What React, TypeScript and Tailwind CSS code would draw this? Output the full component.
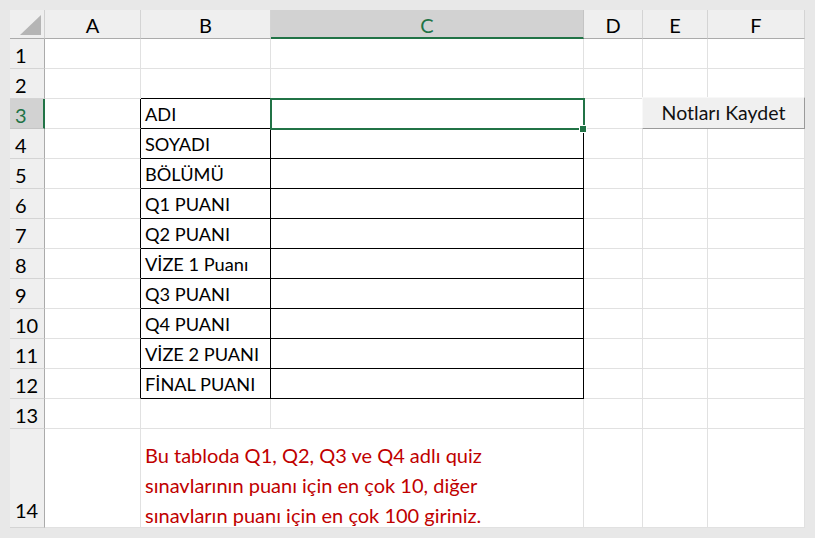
import React from "react";

const cols = ["A", "B", "C", "D", "E", "F"];

const labels: Record<number, string> = {
  3: "ADI",
  4: "SOYADI",
  5: "BÖLÜMÜ",
  6: "Q1 PUANI",
  7: "Q2 PUANI",
  8: "VİZE 1 Puanı",
  9: "Q3 PUANI",
  10: "Q4 PUANI",
  11: "VİZE 2 PUANI",
  12: "FİNAL PUANI",
};

const font = { fontFamily: "Lato, 'Open Sans', sans-serif" };

function inTable(row: number) {
  return row >= 3 && row <= 12;
}

function Cell({ row, col }: { row: number; col: number }) {
  // col index: 0 = A, 1 = B, ...
  let right = "border-r-[#e1e1e1]";
  let bottom = "border-b-[#e1e1e1]";
  if (inTable(row) && col <= 2) right = "border-r-black";
  if (inTable(row) && (col === 1 || col === 2)) bottom = "border-b-black";
  if (row === 2 && (col === 1 || col === 2)) bottom = "border-b-black";
  if (row === 14 && col === 1) right = "border-r-transparent";

  const label = col === 1 ? labels[row] : undefined;

  return (
    <div className={`relative bg-white border-r border-b ${right} ${bottom} flex items-center`}>
      {label && <span className="pl-[4px] pt-[2px] text-[18.2px] text-black leading-none whitespace-nowrap">{label}</span>}

      {row === 3 && col === 2 && (
        <div className="absolute -left-[1px] -top-[1px] w-[315px] h-[32px] border-2 border-[#217346] z-10">
          <div className="absolute -right-[3px] -bottom-[4px] w-[6px] h-[6px] bg-[#217346] outline outline-1 outline-white" />
        </div>
      )}

      {row === 3 && col === 4 && (
        <button className="absolute left-[-1px] top-[-2px] w-[163px] h-[32px] z-10 bg-[#f0f0f0] border border-t-[#f8f8f8] border-l-[#f8f8f8] border-r-[#9a9a9a] border-b-[#9a9a9a] text-[19.5px] text-[#111] leading-none">
          Notları Kaydet
        </button>
      )}

      {row === 14 && col === 1 && (
        <div className="absolute left-[4px] bottom-[-3px] z-10 flex flex-col text-[20px] text-[#c00000] whitespace-nowrap leading-[30px]">
          <span>Bu tabloda Q1, Q2, Q3 ve Q4 adlı quiz</span>
          <span>sınavlarının puanı için en çok 10, diğer</span>
          <span>sınavların puanı için en çok 100 giriniz.</span>
        </div>
      )}
    </div>
  );
}

export default function App() {
  const rows = Array.from({ length: 14 }, (_, i) => i + 1);

  return (
    <div className="w-[815px] h-[538px] bg-[#e8e8e8] p-[10px] box-border" style={font}>
      <div className="grid grid-cols-[35px_96px_130px_313px_59px_65px_97px] grid-rows-[29px_repeat(13,30px)_99px]">
        {/* corner */}
        <div className="relative bg-[#efefef] border-r border-b border-r-[#d0d0d0] border-b-[#ababab]">
          <svg className="absolute left-[10px] top-[5px]" width="22" height="21" viewBox="0 0 22 21">
            <polygon points="0,20 21,20 21,0" fill="#b5b5b5" />
          </svg>
        </div>

        {/* column headers */}
        {cols.map((c) =>
          c === "C" ? (
            <div
              key={c}
              className="bg-[#d2d2d2] border-r border-r-[#c4c4c4] border-b-2 border-b-[#217346] flex items-center justify-center pt-[2px] text-[20px] text-[#217346]"
            >
              {c}
            </div>
          ) : (
            <div
              key={c}
              className="bg-[#efefef] border-r border-b border-r-[#d4d4d4] border-b-[#ababab] flex items-center justify-center pt-[2px] text-[20px] text-black"
            >
              {c}
            </div>
          )
        )}

        {rows.map((r) => (
          <React.Fragment key={r}>
            {r === 3 ? (
              <div className="bg-[#d2d2d2] border-r-2 border-b border-r-[#217346] border-b-[#c4c4c4] flex items-center pl-[5px] pt-[2px] text-[20px] text-[#217346]">
                {r}
              </div>
            ) : (
              <div
                className={`bg-[#efefef] border-r border-b border-r-[#ababab] border-b-[#d4d4d4] flex pl-[5px] text-[20px] text-black ${
                  r === 14 ? "items-end pb-[2px]" : "items-center pt-[2px]"
                }`}
              >
                {r}
              </div>
            )}
            {cols.map((_, ci) => (
              <Cell key={ci} row={r} col={ci} />
            ))}
          </React.Fragment>
        ))}
      </div>
    </div>
  );
}
